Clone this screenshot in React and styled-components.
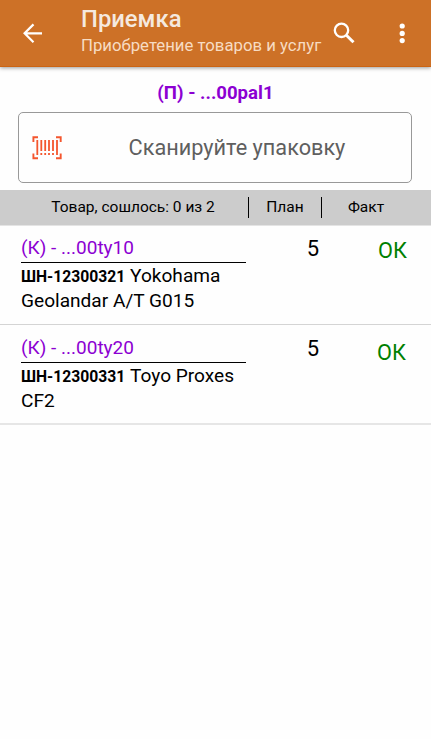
import React from 'react'
import styled, { createGlobalStyle } from 'styled-components'

const GlobalStyle = createGlobalStyle`
  * {
    box-sizing: border-box;
  }
  body {
    margin: 0;
    background: #fefefe;
    font-family: Roboto, sans-serif;
    color: #000000;
  }
`
const Screen = styled.div`
  min-height: 739px;
  overflow: hidden;
`
const Header = styled.header`
  display: flex;
  align-items: flex-start;
  height: 67px;
  padding: 0 17px 0 21px;
  background: #cd7127;
  border-bottom: 1px solid #cb6413;
  box-shadow: 0 1px 4px rgba(0, 0, 0, 0.4);
  color: #ffffff;
`
const IconButton = styled.button`
  flex: none;
  width: 24px;
  height: 24px;
  margin: 21px 0 0 ${({ $gap }) => $gap || 0}px;
  padding: 0;
  border: 0;
  background: none;
  color: inherit;

  svg {
    display: block;
    overflow: visible;
  }
`
const Heading = styled.div`
  flex: 1;
  padding: 5px 0 0 36px;
  white-space: nowrap;
`
const Title = styled.h1`
  margin: 0;
  font-size: 23.8px;
  line-height: 29px;
  font-weight: 500;
  color: #f5e9df;
`
const Subtitle = styled.p`
  margin: 0;
  font-size: 16.75px;
  line-height: 22px;
  color: #f7dcc3;
`
const Package = styled.p`
  margin: 0;
  padding-top: 15px;
  font-size: 18.6px;
  line-height: 23px;
  font-weight: 700;
  text-align: center;
  color: #8c00d2;
`
const ScanField = styled.div`
  display: flex;
  align-items: center;
  height: 71px;
  margin: 7px 19px 7px 18px;
  padding-left: 13px;
  border: 1px solid #999999;
  border-radius: 5px;
`
const ScanText = styled.span`
  flex: 1;
  margin-right: -1px;
  text-align: center;
  font-size: 21.7px;
  color: #5f5f5f;
`
const TableHead = styled.div`
  display: flex;
  align-items: center;
  height: 36px;
  background: #cccccc;
  border-bottom: 1px solid #e4e4e4;
  font-size: 15.5px;
`
const HeadCell = styled.div`
  width: ${({ $width }) => $width}px;
  height: 21px;
  line-height: 20px;
  text-align: center;
  padding-left: ${({ $indent }) => $indent || 0}px;
  padding-right: ${({ $end }) => $end || 0}px;
  border-right: ${({ $last }) => ($last ? '0' : '1px solid #000000')};
`
const Row = styled.div`
  display: flex;
  align-items: flex-start;
  height: ${({ $height }) => $height}px;
  padding: ${({ $top }) => $top}px 0 0 21px;
  border-bottom: ${({ $last }) => ($last ? '2px solid #e6e6e6' : '1px solid #d4d4d4')};
`
const Item = styled.div`
  width: 225px;
`
const Code = styled.div`
  height: 27px;
  font-size: 19px;
  line-height: 24px;
  border-bottom: 1px solid #000000;
  color: #8c00d2;
`
const Name = styled.div`
  font-size: 19.1px;
  line-height: 25px;

  b {
    font-size: 15.7px;
    line-height: 1;
    font-weight: 700;
  }
`
const Plan = styled.div`
  width: 134px;
  font-size: 22px;
  line-height: 26px;
  text-align: center;
`
const Fact = styled.div`
  padding-top: ${({ $drop }) => $drop}px;
  margin-left: ${({ $shift }) => $shift}px;
  font-size: 21.7px;
  line-height: 26px;
  color: #008000;
`

const BarcodeIcon = () => (
  <svg width="30" height="24" viewBox="0 0 30 24" fill="none" stroke="#f4562e">
    <path d="M1.4 6V1.2H6M24 1.2h4.7V6M28.7 17.5v4.8H24M6 22.3H1.4V17.5" strokeWidth="1.9" />
    <path d="M5.3 4v15M9.3 4v11M13.2 4v11M17 4v11M21 4v11M25 4v15M9.3 17.1v2M13.2 17.1v2M17 17.1v2M21 17.1v2" strokeWidth="1.8" />
  </svg>
)

const items = [
  { code: '(К) - ...00ty10', sku: 'ШН-12300321', name: 'Yokohama Geolandar A/T G015', plan: 5, fact: 'ОК', height: 99, top: 10, drop: 2, shift: -2 },
  { code: '(К) - ...00ty20', sku: 'ШН-12300331', name: 'Toyo Proxes CF2', plan: 5, fact: 'ОК', height: 100, top: 11, drop: 4, shift: -3 },
]

const App = () => (
  <Screen>
    <GlobalStyle />
    <Header>
      <IconButton aria-label="Назад">
        <svg width="24" height="24" fill="none" stroke="currentColor" strokeWidth="2.2">
          <path d="M21 12.3H3.5M12.5 3.4L3.6 12.3l8.9 8.9" />
        </svg>
      </IconButton>
      <Heading>
        <Title>Приемка</Title>
        <Subtitle>Приобретение товаров и услуг</Subtitle>
      </Heading>
      <IconButton aria-label="Поиск">
        <svg width="24" height="24" fill="none" stroke="currentColor">
          <circle cx="9.5" cy="9.3" r="6.7" strokeWidth="2.3" />
          <path d="M14.4 14.2l7.1 7.1" strokeWidth="3" />
        </svg>
      </IconButton>
      <IconButton aria-label="Меню" $gap={34}>
        <svg width="24" height="24" fill="currentColor">
          <circle cx="12.2" cy="5" r="2.6" />
          <circle cx="12.2" cy="12.4" r="2.6" />
          <circle cx="12.2" cy="19.6" r="2.6" />
        </svg>
      </IconButton>
    </Header>
    <Package>(П) - ...00pal1</Package>
    <ScanField>
      <BarcodeIcon />
      <ScanText>Сканируйте упаковку</ScanText>
    </ScanField>
    <TableHead>
      <HeadCell $width={249} $indent={18}>Товар, сошлось: 0 из 2</HeadCell>
      <HeadCell $width={73}>План</HeadCell>
      <HeadCell $width={109} $last $end={21}>Факт</HeadCell>
    </TableHead>
    {items.map((item, i) => (
      <Row key={item.sku} $height={item.height} $top={item.top} $last={i === items.length - 1}>
        <Item>
          <Code>{item.code}</Code>
          <Name><b>{item.sku}</b> {item.name}</Name>
        </Item>
        <Plan>{item.plan}</Plan>
        <Fact $drop={item.drop} $shift={item.shift}>{item.fact}</Fact>
      </Row>
    ))}
  </Screen>
)

export default App
